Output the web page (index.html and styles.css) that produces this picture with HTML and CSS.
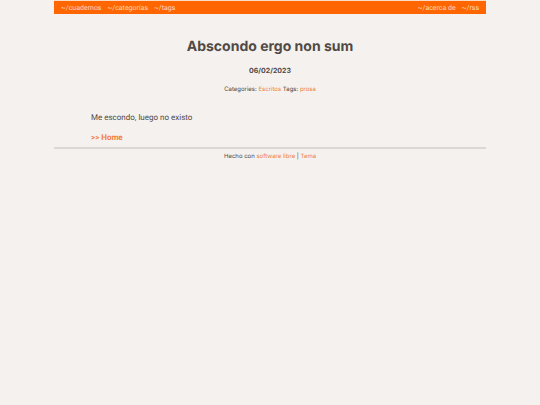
FILE: index.html
```html
<!DOCTYPE html>
<html lang="es">
<head>
  <meta charset="UTF-8">
  <meta name="viewport" content="width=device-width, initial-scale=1.0">
  <title>Abscondo ergo non sum</title>
  <link rel="stylesheet" href="styles.css">
</head>
<body>
  <div class="wrapper">
    <nav class="menu">
      <ul>
        <li><a href="#">~/cuadernos</a></li>
        <li><a href="#">~/categorías</a></li>
        <li><a href="#">~/tags</a></li>
      </ul>
      <ul>
        <li><a href="#">~/acerca de</a></li>
        <li><a href="#">~/rss</a></li>
      </ul>
    </nav>

    <header class="article-meta">
      <h1>Abscondo ergo non sum</h1>
      <h2 class="date">06/02/2023</h2>
      <p class="terms">
        Categories: <a href="#">Escritos</a>
        Tags: <a href="#">prosa</a>
      </p>
    </header>

    <main>
      <p>Me escondo, luego no existo</p>
      <p><a class="home" href="#">&gt;&gt; Home</a></p>
    </main>

    <footer>
      Hecho con <a href="#">software libre</a> | <a href="#">Tema</a>
    </footer>
  </div>
</body>
</html>
```
FILE: styles.css
```css
body {
  margin: 0;
  background: #f5f1ee;
  color: #504945;
  font-family: Inter, sans-serif;
  font-size: 7px;
  line-height: 10px;
  text-rendering: geometricPrecision;
}
a {
  color: #f0803c;
  text-decoration: none;
}
.wrapper {
  width: 80%;
  margin: 0 auto;
}
.menu {
  display: flex;
  justify-content: space-between;
  padding: 2px 7px 1px;
  background: #ff6600;
  border-top: 1px solid #fbdcc4;
  font-family: Roboto, sans-serif;
}
.menu ul {
  display: flex;
  gap: 6px;
  margin: 0;
  padding: 0;
  list-style: none;
}
.menu a {
  color: #fbd9bd;
}
.article-meta {
  margin-top: 23px;
  text-align: center;
  font-size: 6px;
}
h1 {
  margin: 0;
  font-size: 14px;
  line-height: 20px;
}
.date {
  margin: 9px 0;
  font-size: 7px;
  line-height: 10px;
}
.terms {
  margin: 0;
}
main {
  margin: 18px 37px 4px;
  font-family: Roboto, sans-serif;
  font-size: 8px;
}
main p {
  margin: 0 0 10px;
}
main p:last-child {
  margin: 0;
}
.home {
  font-weight: bold;
}
footer {
  padding-top: 3px;
  border-top: 2px solid #dbd7d4;
  text-align: center;
  font-size: 6px;
}
```
